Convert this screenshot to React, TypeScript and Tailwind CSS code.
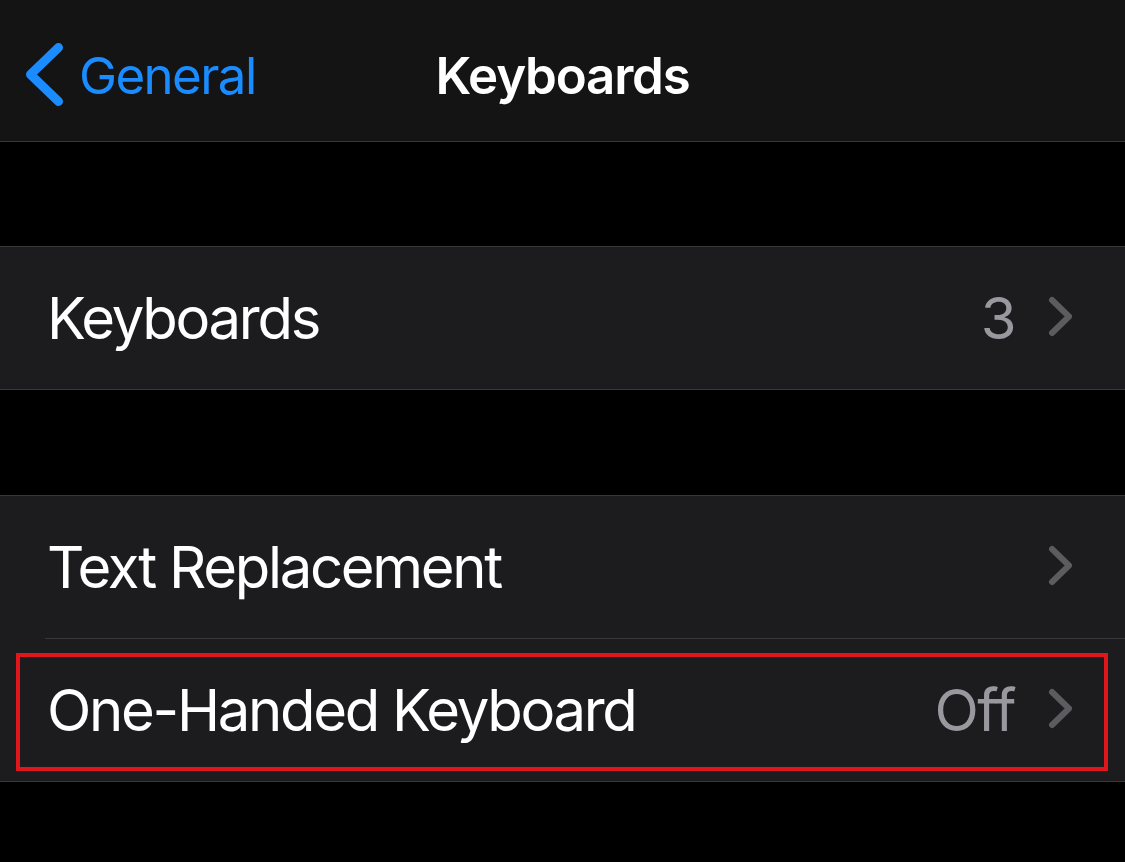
import React from "react";

const font = { fontFamily: "Inter, 'Noto Sans', sans-serif" };

function Chevron() {
  return (
    <svg width="30" height="46" viewBox="0 0 30 46" className="shrink-0">
      <polyline
        points="6,5 23,21.5 6,38"
        fill="none"
        stroke="#5b5b60"
        strokeWidth="6"
        strokeLinecap="round"
        strokeLinejoin="round"
      />
    </svg>
  );
}

interface RowProps {
  label: string;
  value?: string;
  highlight?: boolean;
}

function Row({ label, value, highlight }: RowProps) {
  return (
    <div className="relative flex h-[142px] items-center bg-[#1c1c1e] pl-[47px] pr-[49px]">
      <span className="flex-1 text-[58px] leading-none tracking-[-2.3px] text-white">{label}</span>
      {value && (
        <span className="mr-[31px] text-[58px] leading-none tracking-[-1.5px] text-[#98989e]">{value}</span>
      )}
      <Chevron />
      {/* red annotation box */}
      {highlight && (
        <div className="pointer-events-none absolute top-[14px] bottom-[10px] left-[16px] right-[17px] border-4 border-[#e0161c]" />
      )}
    </div>
  );
}

export default function App() {
  return (
    <div className="min-h-[862px] w-[1125px] bg-black" style={font}>
      {/* Nav bar */}
      <header className="relative flex h-[142px] items-center border-b border-[#38383b] bg-[#141414] pt-[9px]">
        <div className="flex items-center pl-[22px]">
          <svg width="46" height="72" viewBox="0 0 46 72">
            <polyline
              points="36.5,8.5 8.5,35.5 36.5,62.5"
              fill="none"
              stroke="#1a8cff"
              strokeWidth="9"
              strokeLinecap="round"
              strokeLinejoin="round"
            />
          </svg>
          <span className="ml-[11px] text-[51px] leading-none tracking-[-1.6px] text-[#1a8cff]">General</span>
        </div>
        <h1 className="absolute left-1/2 -translate-x-1/2 text-[51px] font-semibold leading-none tracking-[-1.2px] text-white">
          Keyboards
        </h1>
      </header>

      <div className="h-[104px]" />

      <section className="border-y border-[#38383b]">
        <Row label="Keyboards" value="3" />
      </section>

      <div className="h-[105px]" />

      <section className="border-y border-[#38383b] bg-[#1c1c1e]">
        <Row label="Text Replacement" />
        <div className="ml-[45px] h-px bg-[#38383b]" />
        <Row label="One-Handed Keyboard" value="Off" highlight />
      </section>
    </div>
  );
}
